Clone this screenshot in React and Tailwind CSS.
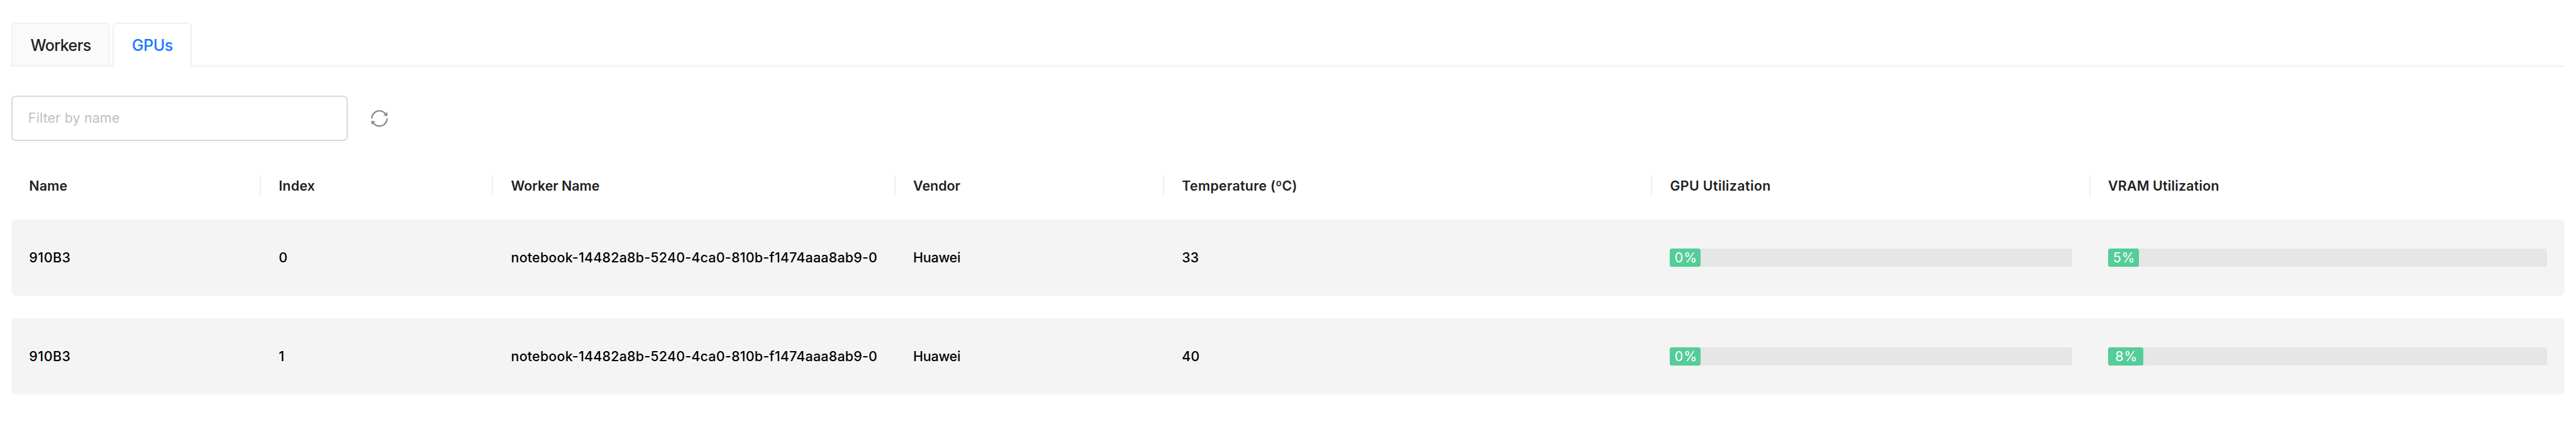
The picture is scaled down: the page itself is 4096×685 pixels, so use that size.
import { AiOutlineSync } from "react-icons/ai";

const GRID =
  "grid grid-cols-[minmax(0,445fr)_minmax(0,414fr)_minmax(0,717fr)_minmax(0,479fr)_minmax(0,870fr)_minmax(0,781fr)_minmax(0,846fr)] items-center";

const columns = [
  { title: "Name", spacing: "tracking-[0.13px]" },
  { title: "Index", spacing: "tracking-[0.2px]" },
  { title: "Worker Name", spacing: "tracking-[-0.04px]" },
  { title: "Vendor", spacing: "tracking-[0px]" },
  { title: "Temperature (ºC)", spacing: "tracking-[0.25px]" },
  { title: "GPU Utilization", spacing: "tracking-[0.38px]" },
  { title: "VRAM Utilization", spacing: "tracking-[0.17px]" },
];

const gpus = [
  { name: "910B3", index: 0, worker: "notebook-14482a8b-5240-4ca0-810b-f1474aaa8ab9-0", vendor: "Huawei", temperature: 33, gpu: 0, vram: 5 },
  { name: "910B3", index: 1, worker: "notebook-14482a8b-5240-4ca0-810b-f1474aaa8ab9-0", vendor: "Huawei", temperature: 40, gpu: 0, vram: 8 },
];

function Tabs() {
  return (
    <nav className="flex h-[70px] gap-1 border-b-2 border-[#f0f0f0] text-[25px] font-medium">
      <button className="-mb-[2px] flex h-[70px] w-[157.5px] items-center justify-center rounded-t-[7px] border-2 border-[#f0f0f0] bg-[#fafafa] pt-[4px] tracking-[-0.6px] text-[#1f1f1f]">
        Workers
      </button>
      <button className="-mb-[2px] flex h-[70px] w-[126px] items-center justify-center rounded-t-[7px] border-2 border-[#f0f0f0] border-b-white bg-white pt-[4px] tracking-[-0.4px] text-[#1677ff]">
        GPUs
      </button>
    </nav>
  );
}

function Toolbar() {
  return (
    <div className="mt-[46px] flex h-[72px] items-center gap-[34px]">
      <input
        className="h-[72px] w-[535px] rounded-[7px] border-2 border-[#d9d9d9] bg-white pb-[2px] pl-[25px] text-[21.4px] tracking-[0.17px] outline-none placeholder:text-[#bfbfbf]"
        placeholder="Filter by name"
      />
      <AiOutlineSync className="size-[32.6px] text-[#8c8c8c]" />
    </div>
  );
}

function Bar({ value }) {
  return (
    <div className="h-[29px] rounded-[3.5px] bg-[#e6e6e6]">
      <div
        className="flex h-full min-w-[48.5px] items-center justify-center rounded-[3.5px] bg-[#55cd98] pl-[2.5px] font-normal tracking-[0.8px] text-white"
        style={{ width: `${value}%` }}
      >
        {value}%
      </div>
    </div>
  );
}

function Cell({ children, className = "" }) {
  return <div className={`px-[28.5px] whitespace-nowrap ${className}`}>{children}</div>;
}

function GpuRow({ gpu }) {
  return (
    <div className={`${GRID} h-[121px] rounded-[7px] bg-[#f4f4f4] font-medium text-black`}>
      <Cell className="tracking-[0.5px]">{gpu.name}</Cell>
      <Cell>{gpu.index}</Cell>
      <Cell className="tracking-[0.233px]">{gpu.worker}</Cell>
      <Cell className="tracking-[-0.2px]">{gpu.vendor}</Cell>
      <Cell>{gpu.temperature}</Cell>
      <Cell><Bar value={gpu.gpu} /></Cell>
      <Cell><Bar value={gpu.vram} /></Cell>
    </div>
  );
}

export default function App() {
  return (
    <main className="h-[685px] w-full bg-white px-[17.84px] pt-[36px] font-['Inter',sans-serif]">
      <Tabs />
      <Toolbar />
      <section className="mt-[18px] flex flex-col text-[21.4px]">
        <header className={`${GRID} h-[107px] pb-px font-semibold text-[#1f1f1f]`}>
          {columns.map(({ title, spacing }, i) => (
            <div
              key={title}
              className={`flex h-[34px] items-center px-[28.5px] whitespace-nowrap ${spacing} ${
                i < columns.length - 1 ? "border-r-2 border-[#f0f0f0]" : ""
              }`}
            >
              {title}
            </div>
          ))}
        </header>
        <div className="flex flex-col gap-9">
          {gpus.map((gpu) => (
            <GpuRow key={gpu.index} gpu={gpu} />
          ))}
        </div>
      </section>
    </main>
  );
}
